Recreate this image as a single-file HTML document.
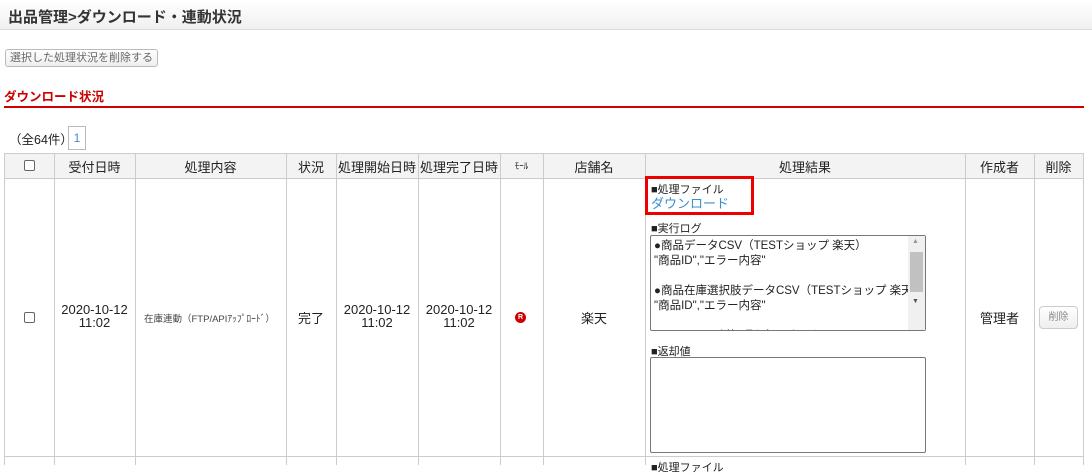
<!DOCTYPE html>
<html><head><meta charset="utf-8"><style>
*{margin:0;padding:0;box-sizing:border-box}
body{width:1092px;height:465px;overflow:hidden;background:#fff;font-family:"Liberation Sans","Noto Sans CJK JP",sans-serif;color:#222;position:relative;font-size:13px}
.a{position:absolute;white-space:nowrap}
.hdr{left:0;top:0;width:1092px;height:30px;background:linear-gradient(#fff,#f0f0f0);border-bottom:1px solid #ddd}
.vl{position:absolute;width:1px;background:#ccc}
.hl{position:absolute;height:1px;background:#ccc}
.c{position:absolute;text-align:center;white-space:nowrap}
.cb{position:absolute;width:11px;height:11px;border:1px solid #666;border-radius:2px;background:#fff}
.ta{position:absolute;border:1px solid #777;border-radius:2px;background:#fff;overflow:hidden;font-size:11.5px;line-height:15px;padding:3px 3px;white-space:nowrap}
</style></head><body>
<div class="a hdr"></div>
<div class="a" style="left:8px;top:6px;font-size:15px;font-weight:bold;color:#333">出品管理&gt;ダウンロード・連動状況</div>
<div class="a" style="left:5px;top:49px;width:153px;height:18px;border:1px solid #bbb;border-radius:3px;background:linear-gradient(#fff,#eee);font-size:11px;color:#666;text-align:center;line-height:16px">選択した処理状況を削除する</div>
<div class="a" style="left:4px;top:86px;font-size:12.5px;font-weight:bold;color:#c00">ダウンロード状況</div>
<div class="a" style="left:4px;top:106px;width:1080px;height:2px;background:#c00"></div>
<div class="a" style="left:9px;top:129px;font-size:12.5px">（全64件）</div>
<div class="a" style="left:68px;top:126px;width:18px;height:24px;border:1px solid #bbb;color:#48c;font-size:12px;text-align:center;line-height:22px">1</div>
<div class="a" style="left:4px;top:153px;width:1080px;height:25px;background:#f3f3f3"></div>
<div class="hl" style="left:4px;top:153px;width:1080px"></div>
<div class="hl" style="left:4px;top:178px;width:1080px"></div>
<div class="hl" style="left:4px;top:456px;width:1080px"></div>
<div class="vl" style="left:4px;top:153px;height:312px"></div>
<div class="vl" style="left:54px;top:153px;height:312px"></div>
<div class="vl" style="left:135px;top:153px;height:312px"></div>
<div class="vl" style="left:286px;top:153px;height:312px"></div>
<div class="vl" style="left:336px;top:153px;height:312px"></div>
<div class="vl" style="left:418px;top:153px;height:312px"></div>
<div class="vl" style="left:500px;top:153px;height:312px"></div>
<div class="vl" style="left:543px;top:153px;height:312px"></div>
<div class="vl" style="left:645px;top:153px;height:312px"></div>
<div class="vl" style="left:965px;top:153px;height:312px"></div>
<div class="vl" style="left:1034px;top:153px;height:312px"></div>
<div class="vl" style="left:1083px;top:153px;height:312px"></div>
<div class="cb" style="left:24px;top:160px"></div>
<div class="c" style="left:54px;width:81px;top:157px">受付日時</div>
<div class="c" style="left:135px;width:151px;top:157px">処理内容</div>
<div class="c" style="left:286px;width:50px;top:157px">状況</div>
<div class="c" style="left:336px;width:82px;top:157px">処理開始日時</div>
<div class="c" style="left:418px;width:82px;top:157px">処理完了日時</div>
<div class="c" style="left:500px;width:43px;top:159px;font-size:9px">ﾓｰﾙ</div>
<div class="c" style="left:543px;width:102px;top:157px">店舗名</div>
<div class="c" style="left:645px;width:320px;top:157px">処理結果</div>
<div class="c" style="left:965px;width:69px;top:157px">作成者</div>
<div class="c" style="left:1034px;width:49px;top:157px">削除</div>
<div class="cb" style="left:24px;top:312px"></div>
<div class="c" style="left:54px;width:81px;top:303px;line-height:13px">2020-10-12<br>11:02</div>
<div class="a" style="left:144px;top:311px;font-size:9.5px;color:#444">在庫連動（FTP/APIｱｯﾌﾟﾛｰﾄﾞ）</div>
<div class="c" style="left:286px;width:50px;top:308px">完了</div>
<div class="c" style="left:336px;width:82px;top:303px;line-height:13px">2020-10-12<br>11:02</div>
<div class="c" style="left:418px;width:82px;top:303px;line-height:13px">2020-10-12<br>11:02</div>
<div class="a" style="left:515px;top:312px;width:11px;height:11px;border-radius:50%;background:#c00;color:#fff;font-size:7px;font-weight:bold;text-align:center;line-height:11px">R</div>
<div class="c" style="left:543px;width:102px;top:308px">楽天</div>
<div class="c" style="left:965px;width:69px;top:308px">管理者</div>
<div class="a" style="left:1039px;top:306px;width:39px;height:23px;border:1px solid #ccc;border-radius:4px;background:linear-gradient(#fff,#eee);color:#888;font-size:10px;text-align:center;line-height:21px">削除</div>
<div class="a" style="left:645px;top:176px;width:109px;height:39px;border:3px solid #e00"></div>
<div class="a" style="left:651px;top:181px;font-size:11px">■処理ファイル</div>
<div class="a" style="left:651px;top:193px;font-size:13px;color:#3a8fd0">ダウンロード</div>
<div class="a" style="left:651px;top:220px;font-size:11px">■実行ログ</div>
<div class="ta" style="left:650px;top:235px;width:276px;height:96px">●商品データCSV（TESTショップ 楽天）<br>"商品ID","エラー内容"<br><br>●商品在庫選択肢データCSV（TESTショップ 楽天）<br>"商品ID","エラー内容"<br><br>→APIにて更新処理を行いました</div>
<div class="a" style="left:908px;top:236px;width:17px;height:94px;background:#f0f0f0"></div>
<div class="a" style="left:910px;top:252px;width:13px;height:40px;background:#c1c1c1"></div>
<div class="a" style="left:912px;top:238px;font-size:7px;color:#999">▲</div>
<div class="a" style="left:912px;top:298px;font-size:7px;color:#555">▼</div>
<div class="a" style="left:651px;top:343px;font-size:11px">■返却値</div>
<div class="ta" style="left:650px;top:357px;width:276px;height:96px"></div>
<div class="a" style="left:651px;top:459px;font-size:11px">■処理ファイル</div>
</body></html>
